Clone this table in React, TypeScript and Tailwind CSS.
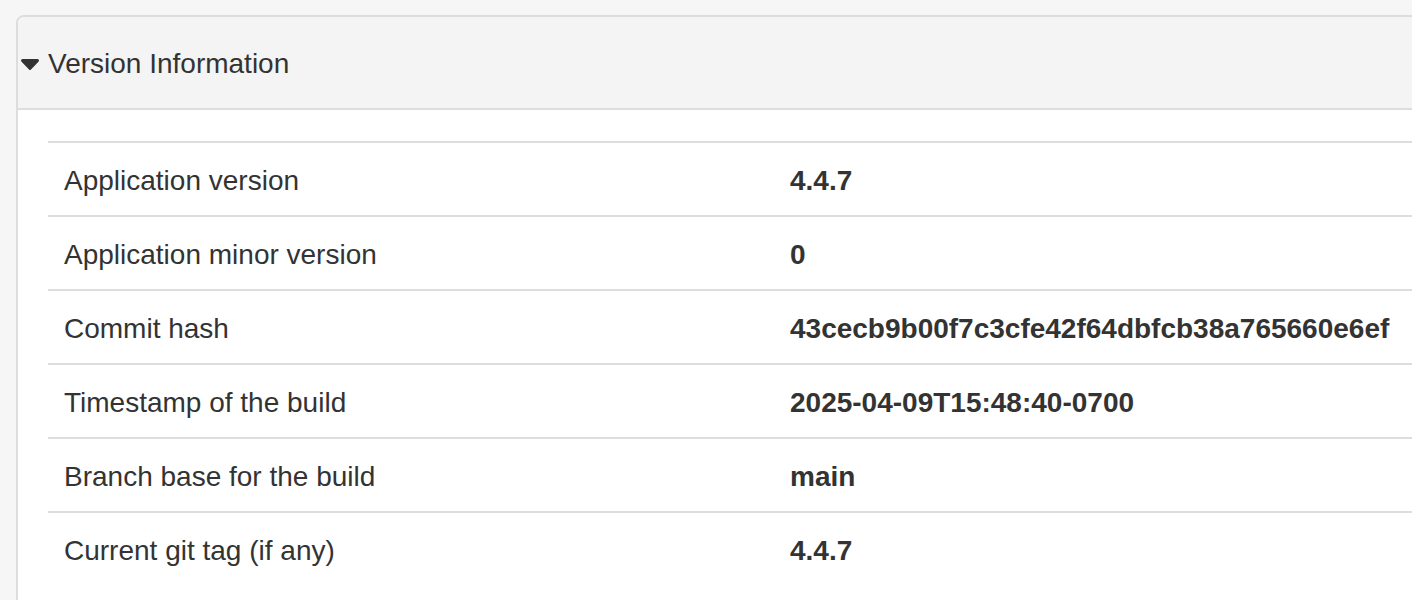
const ROWS: [string, string][] = [
  ['Application version', '4.4.7'],
  ['Application minor version', '0'],
  ['Commit hash', '43cecb9b00f7c3cfe42f64dbfcb38a765660e6ef'],
  ['Timestamp of the build', '2025-04-09T15:48:40-0700'],
  ['Branch base for the build', 'main'],
  ['Current git tag (if any)', '4.4.7'],
];

export default function App() {
  return (
    <div
      className="h-[600px] w-[1412px] overflow-hidden bg-[#f6f6f6] pt-[15px] pl-4 text-[#333]"
      style={{ fontFamily: '"Liberation Sans", Arial, sans-serif' }}
    >
      <div className="w-[1460px] overflow-hidden rounded-tl-[8px] border-2 border-[#ddd] bg-white">
        {/* panel heading */}
        <div className="flex h-[93px] items-center border-b-2 border-[#ddd] bg-[#f4f4f4] pt-[3px] pl-[2px]">
          <svg width="20" height="12" viewBox="0 0 20 12" className="mr-[8px] mt-[1px]">
            <path d="M1 1.5 Q1 0 2.5 0 H17.5 Q19 0 19 1.5 Q19 2.3 18.2 3 L11 10.5 Q10 11.5 9 10.5 L1.8 3 Q1 2.3 1 1.5 Z" fill="#333" />
          </svg>
          <span className="text-[28px] leading-[40px] text-[#333]">Version Information</span>
        </div>
        {/* panel body */}
        <div className="pt-[31px] pb-[40px] pl-[30px]">
          <table className="w-full border-collapse text-[28px] leading-[40px]">
            <tbody>
              {ROWS.map(([k, v]) => (
                <tr key={k} className="border-t-2 border-[#ddd]">
                  <td className="w-[726px] px-4 pt-[18px] pb-[14px] align-top">{k}</td>
                  <td className="px-4 pt-[18px] pb-[14px] align-top font-bold">{v}</td>
                </tr>
              ))}
            </tbody>
          </table>
        </div>
      </div>
    </div>
  );
}
